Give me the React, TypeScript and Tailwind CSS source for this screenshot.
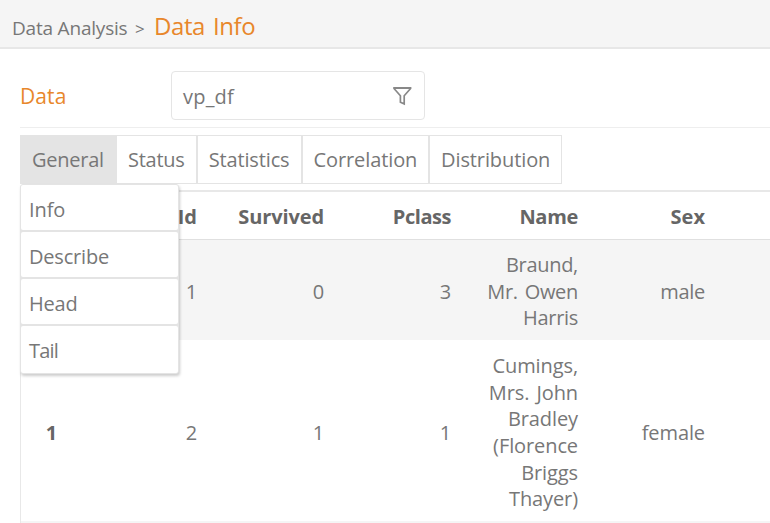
import React from "react";

const tabs = [
  { name: "Status", box: "w-[81px]", text: "tracking-[-0.3px]" },
  { name: "Statistics", box: "w-[105px]", text: "tracking-[-0.15px]" },
  { name: "Correlation", box: "w-[128px]", text: "tracking-[-0.1px]" },
  { name: "Distribution", box: "w-[131px]", text: "tracking-[-0.1px]" },
];
const menu = [
  { name: "Info", text: "tracking-[-0.1px]" },
  { name: "Describe", text: "tracking-[-0.2px]" },
  { name: "Head", text: "tracking-[-0.2px]" },
  { name: "Tail", text: "tracking-[-0.8px]" },
];
const columns = [
  { name: "", text: "" },
  { name: "PassengerId", text: "" },
  { name: "Survived", text: "tracking-[-0.1px]" },
  { name: "Pclass", text: "tracking-[-0.45px]" },
  { name: "Name", text: "tracking-[-0.3px]" },
  { name: "Sex", text: "" },
];
const rows = [
  {
    cells: ["", "1", "0", "3", ["Braund,", "Mr. Owen", "Harris"], "male"],
    style: "h-[100px] bg-[#f5f5f5] pt-[4px] tracking-[-0.3px]",
  },
  {
    cells: ["1", "2", "1", "1", ["Cumings,", "Mrs. John", "Bradley", "(Florence", "Briggs", "Thayer)"], "female"],
    style: "h-[181px] bg-white pt-[5px] tracking-[-0.1px]",
  },
];
const grid = "grid grid-cols-[36px_140px_127px_127px_127px_127px] items-center text-right";

export default function App() {
  return (
    <div className="flex h-[523px] w-[770px] flex-col overflow-hidden bg-white font-['Open_Sans',sans-serif] text-[20px] leading-[26.6px] text-[#777]">
      <header className="flex h-[49px] shrink-0 items-baseline border-b-2 border-[#e7e7e7] bg-[#f5f5f5] pl-3 pt-[10px] whitespace-nowrap">
        <span className="w-[123px] text-[19px] tracking-[-0.2px]">Data Analysis</span>
        <span className="w-[19px] text-[17px]">&gt;</span>
        <h1 className="text-[24px] leading-8 tracking-[-0.4px] [word-spacing:2px] text-[#e8872b]">Data Info</h1>
      </header>
      <main className="flex flex-1 flex-col pl-5">
        <section className="flex h-[79px] shrink-0 items-start border-b border-[#eee] pt-[22px]">
          <h2 className="flex h-[50px] w-[151px] items-center text-[21px] tracking-[0.1px] text-[#e8872b]">Data</h2>
          <div className="flex h-[49px] w-[254px] items-center justify-between rounded-[4px] border-[1.5px] border-[#e5e5e5] pl-[11px] pr-[11px]">
            <span className="pt-[3px] tracking-[0.2px]">vp_df</span>
            <svg width="21" height="20" viewBox="0 0 21 20" fill="none" stroke="#888" strokeWidth="1.7">
              <path d="M1.2 2H19.4" strokeWidth="2" />
              <path d="M2 2.5L8.4 9.7V16.3L12.2 17.9V9.7L18.6 2.5" />
            </svg>
          </div>
        </section>
        <nav className="relative z-10 mt-[7px] flex h-[49px] w-[542px] shrink-0 border border-[#e4e4e4]">
          <div className="flex w-[96px] items-center justify-center bg-[#e4e4e4] pr-[2px] pt-[2px] tracking-[-0.25px]">General</div>
          {tabs.map((t, i) => (
            <div key={t.name} className={`flex items-center justify-center pt-[2px] ${t.box} ${t.text} ${i < 3 ? "border-r-2 border-[#e4e4e4]" : ""}`}>
              {t.name}
            </div>
          ))}
          <ul className="absolute -left-px top-[48px] w-[159px] rounded-[3px] border border-[#e4e4e4] bg-[#e4e4e4] shadow-[1px_2px_3px_rgba(0,0,0,0.2)]">
            {menu.map((m) => (
              <li key={m.name} className={`mb-[2px] flex h-[45px] items-center rounded-[2px] bg-white pl-2 pt-[6px] last:mb-0 last:h-[47px] last:pt-1 ${m.text}`}>{m.name}</li>
            ))}
          </ul>
        </nav>
        <section className="mt-[6px] w-[760px] border-l border-t-2 border-[#e8e8e8]">
          <div className={`${grid} h-[48px] border-b border-[#e0e0e0] pt-[3px] font-bold text-[#666]`}>
            {columns.map((c) => <div key={c.name} className={c.text}>{c.name}</div>)}
          </div>
          {rows.map((r, i) => (
            <div key={i} className={`${grid} ${r.style} [word-spacing:2px]`}>
              {r.cells.map((c, j) => (
                <div key={j} className={j === 0 ? "font-bold text-[#666]" : ""}>
                  {Array.isArray(c) ? c.map((line) => <div key={line}>{line}</div>) : c}
                </div>
              ))}
            </div>
          ))}
          <div className="h-10 bg-[#f5f5f5]" />
        </section>
      </main>
    </div>
  );
}
